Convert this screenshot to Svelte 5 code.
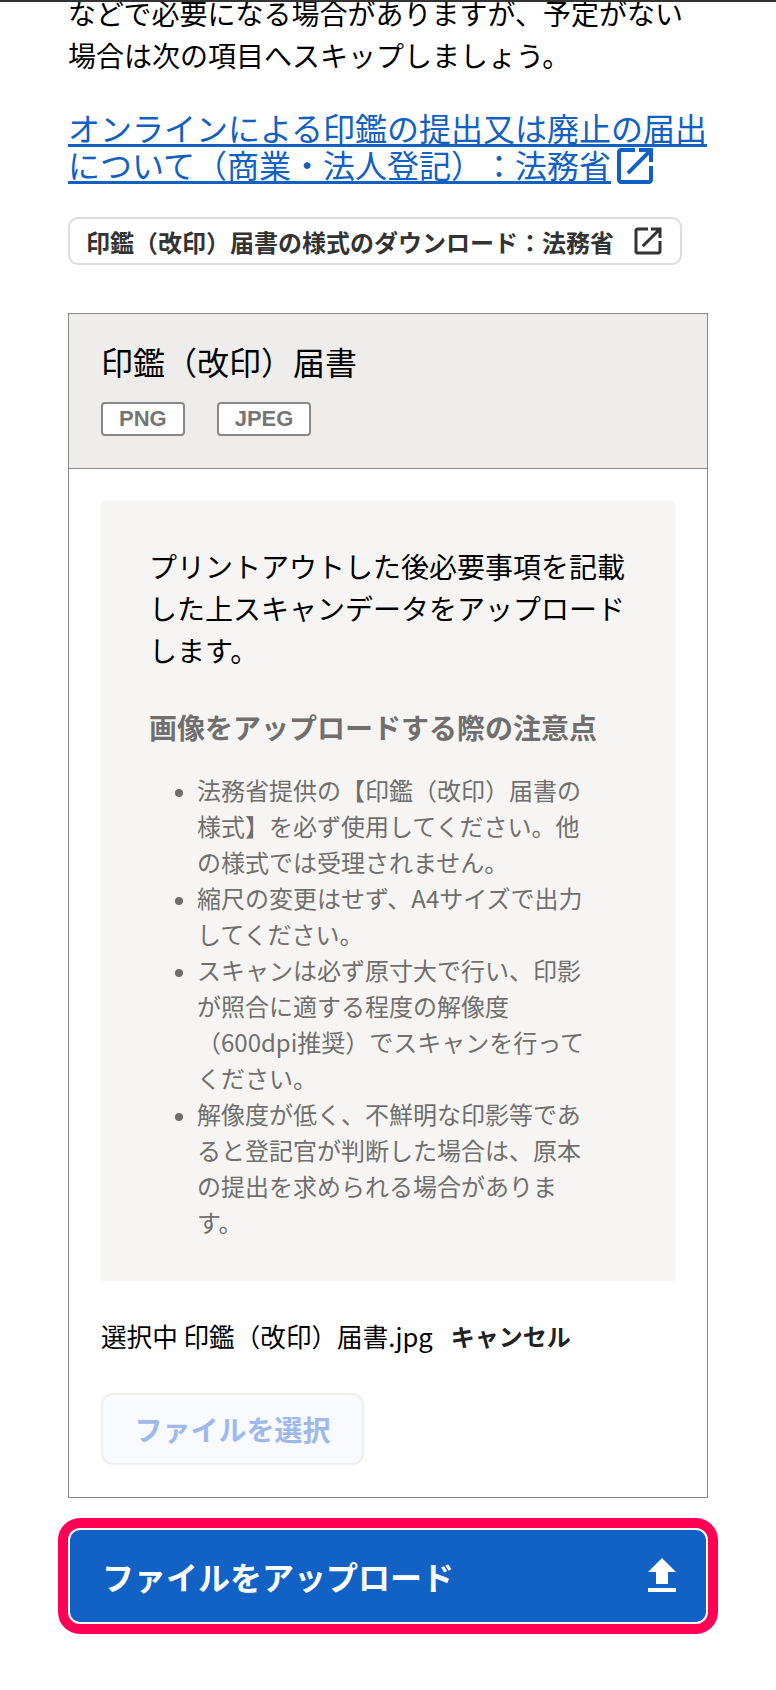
<script lang="ts">
  const notes = [
    '法務省提供の【印鑑（改印）届書の様式】を必ず使用してください。他の様式では受理されません。',
    '縮尺の変更はせず、A4サイズで出力してください。',
    'スキャンは必ず原寸大で行い、印影が照合に適する程度の解像度（600dpi推奨）でスキャンを行ってください。',
    '解像度が低く、不鮮明な印影等であると登記官が判断した場合は、原本の提出を求められる場合があります。'
  ];
  const formats = ['PNG', 'JPEG'];
  const openInNew =
    'M19 19H5V5h7V3H5c-1.11 0-2 .9-2 2v14c0 1.1.89 2 2 2h14c1.1 0 2-.9 2-2v-7h-2v7zM14 3v2h3.59l-9.83 9.83 1.41 1.41L19 6.41V10h2V3h-7z';
</script>

<div class="topline"></div>

<main class="page">
  <p class="lead">などで必要になる場合がありますが、予定がない場合は次の項目へスキップしましょう。</p>

  <a class="link" href="#top">
    <span class="link-text">オンラインによる印鑑の提出又は廃止の届出について（商業・法人登記）：法務省</span><svg class="link-icon" viewBox="0 0 24 24" aria-hidden="true"><path d={openInNew} /></svg>
  </a>

  <a class="download" href="#top">
    <span>印鑑（改印）届書の様式のダウンロード：法務省</span>
    <svg viewBox="0 0 24 24" aria-hidden="true"><path d={openInNew} /></svg>
  </a>

  <section class="card">
    <header class="card-head">
      <h2>印鑑（改印）届書</h2>
      <div class="tags">
        {#each formats as f}
          <span class="tag">{f}</span>
        {/each}
      </div>
    </header>

    <div class="card-body">
      <div class="panel">
        <p class="panel-text">プリントアウトした後必要事項を記載した上スキャンデータをアップロードします。</p>
        <h3>画像をアップロードする際の注意点</h3>
        <ul>
          {#each notes as note}
            <li>{note}</li>
          {/each}
        </ul>
      </div>

      <div class="selected">
        <span class="filename">選択中 印鑑（改印）届書.jpg</span>
        <span class="cancel">キャンセル</span>
      </div>

      <button class="choose" disabled>ファイルを選択</button>
    </div>
  </section>

  <button class="upload">
    <span>ファイルをアップロード</span>
    <svg viewBox="0 0 24 24" aria-hidden="true"><path d="M9 16h6v-6h4l-7-7-7 7h4v6zm-4 2h14v2H5v-2z" /></svg>
  </button>
</main>

<style>
  :global(body) {
    margin: 0;
    background: #fff;
    color: #000;
    font-family: "Noto Sans CJK JP", "Liberation Sans", sans-serif;
    text-spacing-trim: space-all;
  }

  .topline {
    position: fixed;
    top: 0;
    left: 0;
    right: 0;
    height: 2px;
    background: #333;
    z-index: 1;
  }

  .page {
    box-sizing: border-box;
    width: 776px;
    margin-top: -8px;
    padding: 0 68px 56px;
  }

  .lead {
    margin: 0 0 33px;
    font-size: 28px;
    line-height: 42px;
  }

  .link {
    display: block;
    font-size: 32px;
    line-height: 37px;
    color: #1160c3;
    text-decoration: none;
  }

  .link-text {
    text-decoration: underline;
    text-decoration-thickness: 3px;
    text-decoration-skip-ink: none;
    text-underline-offset: 3px;
  }

  .link-icon {
    width: 48px;
    height: 48px;
    margin: -12px 0;
    vertical-align: 0;
    fill: #1160c3;
  }

  .download {
    display: flex;
    align-items: center;
    justify-content: space-between;
    box-sizing: border-box;
    width: 614px;
    height: 48px;
    margin: 34px 0 48px;
    padding: 0 14px 0 16px;
    border: 2px solid #ddd;
    border-radius: 10px;
    color: #333;
    font-size: 24px;
    font-weight: 700;
    text-decoration: none;
  }

  .download svg {
    width: 36px;
    height: 36px;
    fill: #333;
  }

  .card {
    border: 1px solid #888;
  }

  .card-head {
    height: 155px;
    box-sizing: border-box;
    padding: 23px 32px 0;
    background: #eeedec;
    border-bottom: 1px solid #888;
  }

  h2 {
    margin: 0;
    font-size: 32px;
    font-weight: 400;
    line-height: 48px;
  }

  .tags {
    display: flex;
    gap: 32px;
    margin-top: 17px;
  }

  .tag {
    box-sizing: border-box;
    height: 34px;
    padding: 0 16px;
    background: #fff;
    border: 2px solid #888;
    border-radius: 4px;
    color: #757575;
    font-family: "Liberation Sans", sans-serif;
    font-size: 22px;
    font-weight: 700;
    line-height: 30px;
  }

  .card-body {
    padding: 32px;
  }

  .panel {
    padding: 44px 48px 41px;
    background: #f6f5f4;
  }

  .panel-text {
    margin: 0;
    font-size: 28px;
    line-height: 42px;
  }

  h3 {
    margin: 35px 0 0;
    color: #706f6d;
    font-size: 28px;
    font-weight: 700;
    line-height: 42px;
  }

  ul {
    width: 392px;
    margin: 24px 0 0;
    padding: 0 0 0 48px;
    color: #706f6d;
    font-size: 24px;
    line-height: 36px;
  }

  li::marker {
    font-size: 20px;
  }

  .selected {
    display: flex;
    align-items: center;
    gap: 18px;
    height: 39px;
    margin-top: 35px;
  }

  .filename {
    font-size: 25.6px;
  }

  .cancel {
    color: #222;
    font-size: 24px;
    font-weight: 700;
  }

  button {
    font-family: inherit;
  }

  .choose {
    display: block;
    box-sizing: border-box;
    width: 263px;
    height: 72px;
    margin-top: 38px;
    padding: 0;
    background: #f8fafe;
    border: 2px solid #eee;
    border-radius: 12px;
    color: #9db9e9;
    font-size: 28px;
    font-weight: 700;
  }

  .upload {
    display: flex;
    align-items: center;
    justify-content: space-between;
    box-sizing: border-box;
    width: 640px;
    height: 96px;
    margin-top: 30px;
    padding: 0 20px 0 32px;
    background: #1261c4;
    border: 2px solid #fff;
    border-radius: 12px;
    box-shadow: 0 0 0 10px #ff0055;
    color: #fff;
    font-size: 32px;
    font-weight: 700;
  }

  .upload svg {
    width: 48px;
    height: 48px;
    fill: #fff;
  }
</style>
